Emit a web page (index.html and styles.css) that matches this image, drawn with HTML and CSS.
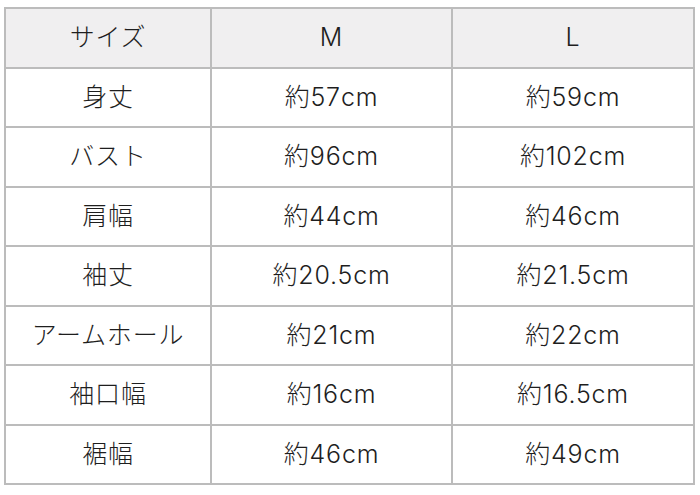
FILE: index.html
```html
<!DOCTYPE html>
<html lang="ja">
<head>
<meta charset="utf-8">
<link rel="stylesheet" href="styles.css">
</head>
<body>
<table class="size-table">
  <colgroup>
    <col class="c1"><col class="c2"><col class="c3">
  </colgroup>
  <thead>
    <tr><th>サイズ</th><th>M</th><th>L</th></tr>
  </thead>
  <tbody>
    <tr><td>身丈</td><td>約57cm</td><td>約59cm</td></tr>
    <tr><td>バスト</td><td>約96cm</td><td>約102cm</td></tr>
    <tr><td>肩幅</td><td>約44cm</td><td>約46cm</td></tr>
    <tr><td>袖丈</td><td>約20.5cm</td><td>約21.5cm</td></tr>
    <tr><td>アームホール</td><td>約21cm</td><td>約22cm</td></tr>
    <tr><td>袖口幅</td><td>約16cm</td><td>約16.5cm</td></tr>
    <tr><td>裾幅</td><td>約46cm</td><td>約49cm</td></tr>
  </tbody>
</table>
</body>
</html>
```
FILE: styles.css
```css
html, body {
  margin: 0;
  padding: 0;
  background: #ffffff;
}
body {
  padding: 7px 0 0 4px;
  font-family: "Inter", "Noto Sans CJK JP", sans-serif;
  color: #1e1e1e;
}
.size-table {
  border-collapse: collapse;
  table-layout: fixed;
  width: 689px;
  font-size: 25px;
  font-weight: 300;
  letter-spacing: 0.8px;
}
.size-table .c1 { width: 206px; }
.size-table .c2 { width: 241px; }
.size-table .c3 { width: 242px; }
.size-table th,
.size-table td {
  border: 2px solid #bcbcbc;
  height: 57.5px;
  padding: 0;
  text-align: center;
  vertical-align: middle;
  font-weight: 300;
  line-height: 1;
}
.size-table th {
  background: #f0eff0;
}
```
